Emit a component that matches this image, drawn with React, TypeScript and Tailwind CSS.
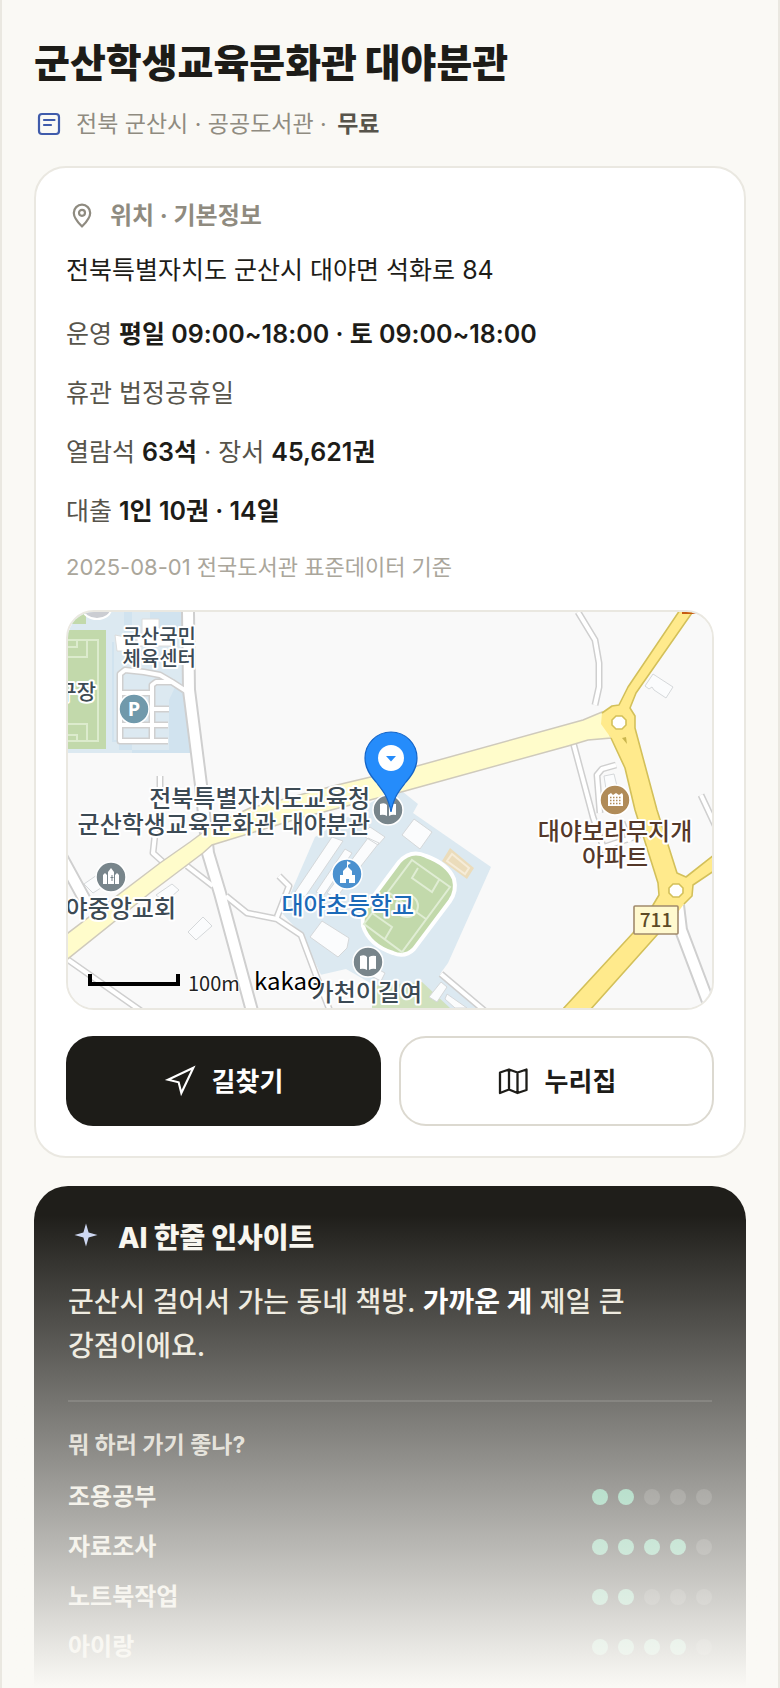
import type { ReactNode } from 'react';
import { Navigation } from 'lucide-react';

const purposes = [
    { name: '조용공부', score: 2 },
    { name: '자료조사', score: 4 },
    { name: '노트북작업', score: 2 },
    { name: '아이랑', score: 4 },
];

export default function App() {
    return (
        <main className="min-h-screen border-x-2 border-[#eae8e1] bg-[#faf9f5] px-8 pt-9 text-[#1d1c18] font-['Inter','Noto_Sans_CJK_KR',sans-serif]">
            <header>
                <h1 className="text-[39px] leading-[54px] font-black">군산학생교육문화관 대야분관</h1>
                <div className="mt-4 flex items-center text-[23px] leading-9 text-[#8f8b80]">
                    <NoteIcon />
                    <p className="ml-3">
                        전북 군산시 · 공공도서관 · <strong className="ml-1 font-bold text-[#57544b]">무료</strong>
                    </p>
                </div>
            </header>

            <section className="mt-6 rounded-[32px] border-2 border-[#eae8e1] bg-white p-[30px]">
                <div className="flex items-center text-[#8f8b80]">
                    <PlaceIcon />
                    <h2 className="ml-3 text-[24px] leading-9 font-bold">위치 · 기본정보</h2>
                </div>
                <p className="mt-[18px] text-[25px] leading-9">전북특별자치도 군산시 대야면 석화로 84</p>

                <div className="mt-7 flex flex-col gap-[23px] text-[25px] leading-9 text-[#57544b]">
                    <p>운영 <Strong>평일 09:00~18:00 · 토 09:00~18:00</Strong></p>
                    <p>휴관 법정공휴일</p>
                    <p>열람석 <Strong>63석</Strong> · 장서 <Strong>45,621권</Strong></p>
                    <p>대출 <Strong>1인 10권 · 14일</Strong></p>
                </div>
                <p className="mt-[23px] text-[22px] leading-[30px] text-[#aaa69b]">2025-08-01 전국도서관 표준데이터 기준</p>

                <div className="mt-7 overflow-hidden rounded-[28px] border-2 border-[#eae8e1] bg-[#f9f9f9]">
                    <LibraryMap />
                </div>

                <div className="mt-[26px] grid grid-cols-2 gap-[18px]">
                    <button type="button" className="flex h-[90px] items-center justify-center gap-4 rounded-[27px] bg-[#1d1c18] text-[26px] font-bold text-white">
                        <Navigation size={32} strokeWidth={1.6} strokeLinejoin="miter" />
                        길찾기
                    </button>
                    <button type="button" className="flex h-[90px] items-center justify-center gap-4 rounded-[27px] border-2 border-[#dcd9d0] bg-white text-[26px] font-bold">
                        <FoldedMapIcon />
                        누리집
                    </button>
                </div>
            </section>

            {/* Insight teaser, fades out into the page */}
            <section className="relative mt-7">
                <div className="rounded-t-[34px] bg-[#1f1e1a] px-[34px] pt-[34px] pb-[25px]">
                    <div className="flex items-center">
                        <SparkIcon />
                        <h2 className="ml-3.5 text-[28px] leading-9 font-extrabold text-[#f8f6ef]">AI 한줄 인사이트</h2>
                    </div>
                    <p className="mt-6 text-[28px] leading-[44px] font-medium text-[#ebe7db]">
                        군산시 걸어서 가는 동네 책방. <strong className="font-bold text-white">가까운 게</strong> 제일 큰
                        <br />
                        강점이에요.
                    </p>
                    <hr className="mt-8 border-t-2 border-[#3b3a36]" />
                    <h3 className="mt-7 text-[23px] leading-[30px] font-bold text-[#d1cdc2]">뭐 하러 가기 좋나?</h3>
                    <ul className="mt-[22px] flex flex-col gap-5">
                        {purposes.map((p) => (
                            <li key={p.name} className="flex items-center justify-between">
                                <span className="text-[24px] leading-[30px] font-bold text-[#ebe7db]">{p.name}</span>
                                <Dots score={p.score} />
                            </li>
                        ))}
                    </ul>
                </div>
                <div className="pointer-events-none absolute -inset-x-8 top-[29px] bottom-0 bg-linear-to-b from-[#faf9f5]/0 to-[#faf9f5]" />
            </section>
        </main>
    );
}

function Strong({ children }: { children: ReactNode }) {
    return <strong className="font-semibold text-[#1d1c18]">{children}</strong>;
}

function Dots({ score }: { score: number }) {
    return (
        <span className="flex gap-2.5" role="img" aria-label={`5점 중 ${score}점`}>
            {[1, 2, 3, 4, 5].map((n) => (
                <span key={n} className={`size-4 rounded-full ${n <= score ? 'bg-[#5fbc94]' : 'bg-[#403f3b]'}`} />
            ))}
        </span>
    );
}

function NoteIcon() {
    return (
        <svg width="30" height="30" viewBox="0 0 30 30" fill="none" stroke="#3f5bab" strokeWidth="2.200" strokeLinecap="round" aria-hidden="true">
            <rect x="5" y="5" width="20" height="20" rx="3" />
            <path d="M10 11h10.500M10 16h7" />
        </svg>
    );
}

function PlaceIcon() {
    return (
        <svg width="32" height="32" viewBox="0 0 32 32" fill="none" stroke="currentColor" strokeWidth="2.200" strokeLinejoin="round" aria-hidden="true">
            <path d="M16 26.500c-2.500-2.600-8.200-8.200-8.200-13.600a8.200 8.200 0 0 1 16.400 0c0 5.400-5.700 11-8.200 13.600Z" />
            <circle cx="16" cy="12.800" r="3" />
        </svg>
    );
}

function FoldedMapIcon() {
    return (
        <svg width="32" height="32" viewBox="0 0 32 32" fill="none" stroke="currentColor" strokeWidth="2.300" strokeLinejoin="round" aria-hidden="true">
            <path d="M3 7.500l9-3 8.500 3 9-3v20.500l-9 3-8.500-3.500-9 3.500ZM12 4.500v20M20.500 7.500v20.500" />
        </svg>
    );
}

function SparkIcon() {
    return (
        <svg width="36" height="32" viewBox="0 0 36 32" fill="#ccd6f1" aria-hidden="true">
            <path d="M18 1.500l2.600 8.900 8.900 2.600-8.900 2.600-2.600 8.900-2.600-8.900-8.900-2.600 8.900-2.600Z" />
        </svg>
    );
}

function LibraryMap() {
    return (
        <svg viewBox="68 612 644 396" className="block h-auto w-full" role="img" aria-label="군산학생교육문화관 대야분관 위치 지도">
            <rect x="68" y="612" width="644" height="396" fill="#f9f9f9" />

            {/* Sports centre block */}
            <path d="M68 612h115l2 80 6 61H68Z" fill="#dce9f1" />
            <path d="M112 642v100h20v11h59l-5-62-9-8-8 17v50h-50v-10h-5v-98ZM150 612h32v16h-32ZM124 612h8v20h-8Z" fill="#d1e3ef" />
            <path d="M68 612h18v12H68ZM68 630h38v119H68Z" fill="#c2d9ab" />
            <path d="M68 640h30v101H68M68 657h19v-17M68 647h9v-7M68 724h19v17M68 735h9v6" fill="none" stroke="#dcebcd" strokeWidth="2" />
            <ellipse cx="97" cy="609" rx="14" ry="10" fill="#cbcdd2" stroke="#fff" strokeWidth="2" />
            <path d="M142 619h17v9h12v18h-34v-12h5ZM115 635l20 4v12h-18Z" fill="#fff" stroke="#dcdcdc" />

            {/* School block */}
            <path d="M380 797l23-5 15 12-5 9 78 54-43 96-8 11 44 34H345l-25-35-18-38-20-22 33-76Z" fill="#dce9f1" />
            <path d="M320 975l26-6 26 15v24h-43Z" fill="#f9f9f9" />
            <path d="M372 986l50-4 28 26h-78Z" fill="#d0e1bd" />
            <g fill="#fbfcfd" stroke="#d5d8da">
                <path d="M414 819l18 13-12 17-18-14ZM332 837l11 4-38 56-10-5ZM345 849l7 4-28 42-8-3ZM368 838l11 5-43 55-9-5ZM370 827l15 10-7 8-16-10ZM322 921l27 17-2 10-9 9-28-20ZM441 982l6 5-10 15-8-5ZM447 994l20 14h-12l-10-9ZM372 966l13 7-4 8-12-6Z" />
                <path d="M203 917l9 9-16 14-8-8ZM172 884l7 6-14 12-9-7ZM97 875l10 9-14 9-9-9ZM653 674l20 13-7 11-12-8-2-3-3 2-4-3ZM604 776l10-2 3 12-11 3Z" />
            </g>
            <path d="M450 848l24 20-7 11-25-18Z" fill="#ebdcbb" />
            <path d="M452 854l17 14-4 6-18-13Z" fill="none" stroke="#f6ecd8" strokeWidth="2" />
            <path d="M399 862q12-13 27-6 22 8 28 23 3 12-4 22l-36 48q-9 9-21 4-24-8-30-27-2-13 7-25Z" fill="#c2d9ab" stroke="#fff" strokeWidth="4" />
            <path d="M412 860l38 27-48 65-38-28ZM388 892l38 27M418 868l-6 10 20 14 7-12M372 913l20 14-7 12" fill="none" stroke="#e0edd4" strokeWidth="2" />
            <circle cx="407" cy="906" r="11" fill="none" stroke="#e0edd4" strokeWidth="2" />

            {/* Minor streets: grey casing, then white surface */}
            <g fill="none" strokeLinejoin="round">
                <g stroke="#cfcfcf">
                    <path strokeWidth="14" d="M188 612l1 78 12 95 7 68 12 40 32 118" />
                    <path strokeWidth="14" d="M62 858l24 44M678 905l3 25 31 82" />
                    <path strokeWidth="7" d="M187 866l26 20M226 896l21 17 30 6 24 16 15 40 14 36M277 917l12-31-10-10M156 825l-3 28 10 9M64 957l80 56M441 974l45 38M578 612l17 28 4 23v24l-4 18M573 742l20 75 12 35M616 765l-14 4-5 6 3 38M701 795l14 30M160 776v12M604 847l36-12M622 822l8 20" />
                    <path strokeWidth="7" d="M184 690l-12-8-12-7-16-3-19-2-5 4v67h48M121 693h30M121 725h47M152 741v-56l4-3h17M152 709h17" />
                </g>
                <g stroke="#fff">
                    <path strokeWidth="10" d="M188 612l1 78 12 95 7 68 12 40 32 118" />
                    <path strokeWidth="10" d="M62 858l24 44M678 905l3 25 31 82" />
                    <path strokeWidth="4" d="M187 866l26 20M226 896l21 17 30 6 24 16 15 40 14 36M277 917l12-31-10-10M156 825l-3 28 10 9M64 957l80 56M441 974l45 38M578 612l17 28 4 23v24l-4 18M573 742l20 75 12 35M616 765l-14 4-5 6 3 38M701 795l14 30M160 776v12M604 847l36-12M622 822l8 20" />
                    <path strokeWidth="4" d="M186 691l-14-9-12-7-16-3-19-2-5 4v67h48M121 693h30M121 725h47M152 741v-56l4-3h17M152 709h17" />
                </g>
            </g>

            {/* Main roads */}
            <path d="M64 936l96-73 30-21 23-17 37-17 87-23 80-19 166-46 19-8 9 26-23 2-20 6-163 45-105 27-88 27-9 8-53 40-86 69Z" fill="#fffccb" stroke="#cfcabc" strokeWidth="1.500" />
            <path d="M680 610L628 687L619 705L612 706L602 713L601 724L611 738L625 768L635 810L658 883L659 895L653 905L633 933L562 1010H590L657 935L678 912L684 904L692 896L693 885L714 871V855L686 877L677 873L657 810L635 728L635 716L630 708L636 693L694 610Z" fill="#ffea8c" />
            <path
                d="M680 610L628 687L619 705L612 706L602 713M611 738L625 768L635 810L658 883L659 895L653 905L633 933L562 1010M590 1010L657 935L678 912M684 904L692 896L693 885L714 871M714 855L686 877L677 873L657 810L635 728L635 716L630 708L636 693L694 610"
                fill="none"
                stroke="#d3c05a"
                strokeWidth="1.600"
                strokeLinejoin="round"
            />
            <path d="M616 716h6l4 4v5l-4 4h-6l-4-4v-5ZM673 884h6l4 4v5l-4 4h-6l-4-4v-5Z" fill="#fff" stroke="#d3c05a" strokeWidth="1.600" />
            <path d="M622 738l4-1 1 7Z" fill="#c9b54e" />
            <path d="M682 612h14v2h-14Z" fill="#c65b12" />

            <rect x="634" y="906" width="44" height="28" rx="1" fill="#fff9cf" stroke="#a18a6c" strokeWidth="1.600" />

            {/* Place markers */}
            <g stroke="#fff" strokeWidth="1.500">
                <circle cx="134" cy="709" r="15" fill="#7099ab" />
                <circle cx="388" cy="810" r="15" fill="#78858b" />
                <circle cx="111" cy="877" r="15" fill="#78858b" />
                <circle cx="347" cy="874" r="15" fill="#4b91cf" />
                <circle cx="368" cy="962" r="15" fill="#78858b" />
                <circle cx="615" cy="800" r="15" fill="#b08b58" />
            </g>
            <g fill="#fff">
                <path d="M360 956q5-2 7 1v13q-3-2-7-1ZM369 957q3-2 7-1v13q-4-1-7 1ZM380 804q5-2 7 1v11q-3-2-7-1ZM389 805q3-2 7-1v11q-4-1-7 1Z" />
                <path d="M103 875l2-2 2 2v9h-4ZM115 875l2-2 2 2v9h-4ZM108 884v-12l3-4 3 4v12Z" />
                <path d="M340 883v-8h3v-4l4-4v-6l4 2-3 2v2l4 4v4h3v8h-6v-4h-3v4Z" />
                <path d="M608 806v-11l3-2 2 2 3-2 3 2 3-2 1 2v11Z" />
            </g>
            <path d="M110.500 877h1v-2h1v2h1v1h-1v3h-1v-3h-1Z" fill="#78858b" />
            <path d="M610 797.500h12M610 800.500h12M610 803.500h12" stroke="#b08b58" strokeWidth="1.500" strokeDasharray="1.500 1.500" />

            <g fontFamily="'Noto Sans CJK KR', sans-serif" fontWeight="500" stroke="#fff" strokeWidth="4" strokeLinejoin="round" paintOrder="stroke" textAnchor="end">
                <g fill="#3c4a54">
                    <text x="196" y="644" fontSize="20">군산국민</text>
                    <text x="196" y="666" fontSize="20">체육센터</text>
                    <text x="96" y="699" fontSize="21">구장</text>
                    <text x="370" y="807" fontSize="24">전북특별자치도교육청</text>
                    <text x="370" y="833" fontSize="24">군산학생교육문화관 대야분관</text>
                    <text x="176" y="917" fontSize="24">대야중앙교회</text>
                    <text x="422" y="1001" fontSize="24">가천이길여</text>
                </g>
                <text x="414" y="914" fontSize="24" fill="#1c6ab8">대야초등학교</text>
                <g fill="#55392a" textAnchor="middle">
                    <text x="615" y="840" fontSize="24">대야보라무지개</text>
                    <text x="615" y="866" fontSize="24">아파트</text>
                </g>
            </g>
            <text x="656" y="927" fontSize="19" fontFamily="'Noto Sans CJK KR', sans-serif" textAnchor="middle" fontWeight="500" fill="#5d4b26">711</text>
            <text x="134" y="716" fontSize="20" fontFamily="'Noto Sans', sans-serif" textAnchor="middle" fontWeight="700" fill="#fff">P</text>

            {/* Scale and attribution */}
            <path d="M90 974v10h88v-10" fill="none" stroke="#000" strokeWidth="4" />
            <text x="188" y="991" fontSize="20" fontFamily="'Noto Sans CJK KR', sans-serif" fill="#222" stroke="#fff" strokeWidth="2" paintOrder="stroke">100m</text>
            <text x="254" y="990" fontSize="24" fontFamily="'Noto Sans CJK KR', sans-serif" fontWeight="400" fill="#000" stroke="#fff" strokeWidth="2" paintOrder="stroke">kakao</text>

            {/* Library pin */}
            <path d="M391 812c-3-16-8-21-15-30-6-7-11-14-11-24a26 26 0 0 1 52 0c0 10-5 17-11 24-7 9-12 14-15 30Z" fill="#258cfb" stroke="#1465c8" strokeWidth="1.200" />
            <circle cx="391" cy="758" r="13" fill="#fff" />
            <path d="M386 756h10l-5 5.500Z" fill="#258cfb" />
        </svg>
    );
}
